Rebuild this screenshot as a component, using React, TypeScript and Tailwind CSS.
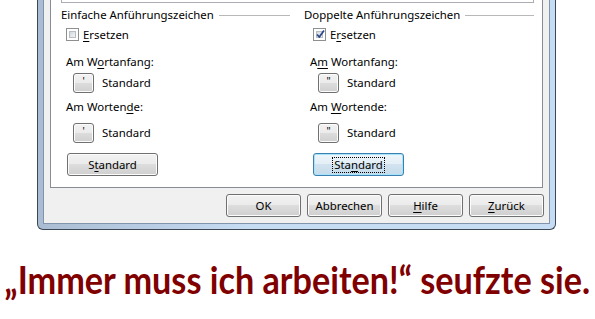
import type { ReactNode } from 'react';

const ui = "font-['Noto_Sans','DejaVu_Sans',sans-serif] text-[11.4px] text-black";

const btnFace =
  'rounded-[3px] border border-[#707070] bg-[linear-gradient(to_bottom,#f2f2f2_0%,#ebebeb_50%,#dddddd_50%,#cfcfcf_100%)] shadow-[inset_0_0_0_1px_#fcfcfc]';

function U({ children }: { children: ReactNode }) {
  return <span className="underline decoration-1 underline-offset-[2px]">{children}</span>;
}

function Checkbox({ checked }: { checked?: boolean }) {
  return (
    <div className="w-[13px] h-[13px] border border-[#8e8f8f] bg-white p-[2px] shrink-0">
      <div className="relative w-full h-full border border-[#b9bec4] bg-[linear-gradient(135deg,#d4d8dd_0%,#f4f5f6_100%)]">
        {checked && (
          <svg className="absolute -left-[2px] -top-[3px]" width="11" height="11" viewBox="0 0 11 11">
            <path d="M2 5.5 L4.3 8 L9 1.5" fill="none" stroke="#2c4a8a" strokeWidth="1.8" strokeLinejoin="round" />
          </svg>
        )}
      </div>
    </div>
  );
}

function GroupHeader({ title }: { title: string }) {
  return (
    <div className="flex items-center gap-[5px] h-[16px]">
      <span className="leading-[16px] whitespace-nowrap">{title}</span>
      <div className="flex-1 h-px bg-[#b8b8b8]" />
    </div>
  );
}

function QuoteRow({ glyph, indent }: { glyph: string; indent: string }) {
  return (
    <div className={`flex items-center h-[20px] ${indent}`}>
      <div className={`w-[21px] h-[20px] flex items-start justify-center ${btnFace}`}>
        <span className="text-[10px] leading-[12px] pt-[1px]">{glyph}</span>
      </div>
      <span className="ml-[8px] leading-[16px]">Standard</span>
    </div>
  );
}

type ColumnProps = {
  title: string;
  checked?: boolean;
  replace: ReactNode;
  start: ReactNode;
  end: ReactNode;
  glyph: string;
  std: ReactNode;
  focused?: boolean;
  labelPad: string;
  checkPad: string;
  quotePad: string;
  bigPad: string;
};

function QuoteColumn(p: ColumnProps) {
  return (
    <div className="flex flex-col">
      <GroupHeader title={p.title} />
      <div className={`mt-[5px] flex items-center h-[13px] gap-[4px] ${p.checkPad}`}>
        <Checkbox checked={p.checked} />
        <span className="leading-[16px]">{p.replace}</span>
      </div>
      <div className={`mt-[13px] h-[16px] leading-[16px] ${p.labelPad}`}>{p.start}</div>
      <div className="mt-[3px]">
        <QuoteRow glyph={p.glyph} indent={p.quotePad} />
      </div>
      <div className={`mt-[6px] h-[16px] leading-[16px] ${p.labelPad}`}>{p.end}</div>
      <div className="mt-[8px]">
        <QuoteRow glyph={p.glyph} indent={p.quotePad} />
      </div>
      <div className={`mt-[10px] ${p.bigPad}`}>
        {p.focused ? (
          <div className="w-[91px] h-[23px] flex items-center justify-center rounded-[3px] border border-[#3c7fb1] bg-[linear-gradient(to_bottom,#eef6fb_0%,#e3eef6_50%,#d2e3ef_50%,#c5dbeb_100%)] shadow-[inset_0_0_0_1px_#a7e4fa]">
            <span className="border border-dotted border-black px-[1px] leading-[14px]">{p.std}</span>
          </div>
        ) : (
          <div className={`w-[91px] h-[23px] flex items-center justify-center ${btnFace}`}>
            <span className="leading-[14px]">{p.std}</span>
          </div>
        )}
      </div>
    </div>
  );
}

function DialogButton({ children }: { children: ReactNode }) {
  return (
    <div className={`w-[75px] h-[23px] flex items-center justify-center ${btnFace}`}>
      <span className="leading-[14px]">{children}</span>
    </div>
  );
}

export default function App() {
  return (
    <div className="w-[595px] h-[319px] bg-white overflow-hidden">
      {/* Window frame, top cut off */}
      <div className="ml-[37px] w-[519px] border-x border-b border-[#3b4756] rounded-b-[6px] bg-[linear-gradient(to_right,#a9bcd2_0%,#c6dcf3_40%,#c6dcf3_100%)] px-[5px] pb-[5px]">
        <div className={`border-x border-b border-[#8294ab] bg-[#f0f0f0] px-[6px] pb-[6px] ${ui}`}>
          {/* Tab page */}
          <div className="border-x border-b border-[#898c95] bg-white pl-[10px] pr-[8px] pb-[11px]">
            <div className="h-[3px] border-x border-b border-[#abadb3] bg-white" />
            <div className="mt-[4px] grid grid-cols-[229px_1fr] gap-x-[14px]">
              <QuoteColumn
                title="Einfache Anführungszeichen"
                replace={<><U>E</U>rsetzen</>}
                start={<>Am W<U>o</U>rtanfang:</>}
                end={<>Am Worten<U>d</U>e:</>}
                glyph="'"
                std={<>S<U>t</U>andard</>}
                labelPad="pl-[5px]"
                checkPad="pl-[5px]"
                quotePad="pl-[12px]"
                bigPad="pl-[6px]"
              />
              <QuoteColumn
                title="Doppelte Anführungszeichen"
                checked
                replace={<>E<U>r</U>setzen</>}
                start={<>A<U>m</U> Wortanfang:</>}
                end={<>Am <U>W</U>ortende:</>}
                glyph={'"'}
                std={<>Sta<U>n</U>dard</>}
                focused
                labelPad="pl-[6px]"
                checkPad="pl-[9px]"
                quotePad="pl-[14px]"
                bigPad="pl-[9px]"
              />
            </div>
          </div>
          {/* Dialog buttons */}
          <div className="mt-[6px] flex justify-end gap-[6px] -mr-px">
            <DialogButton>OK</DialogButton>
            <DialogButton>Abbrechen</DialogButton>
            <DialogButton><U>H</U>ilfe</DialogButton>
            <DialogButton><U>Z</U>urück</DialogButton>
          </div>
        </div>
      </div>

      <p className="mt-[25px] pl-[5px] whitespace-nowrap origin-left scale-x-[0.9] font-['Lato','Noto_Sans',sans-serif] font-bold text-[38px] leading-[48px] text-[#800000]">
        „Immer muss ich arbeiten!“ seufzte sie.
      </p>
    </div>
  );
}
